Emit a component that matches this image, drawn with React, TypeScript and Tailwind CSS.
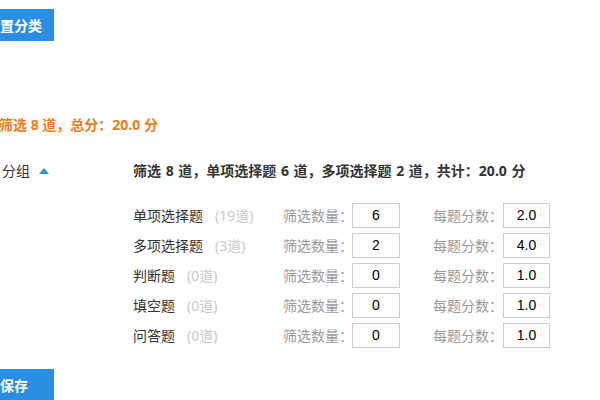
import React from "react";

const rows = [
  { name: "单项选择题", count: "(19道)", num: "6", score: "2.0" },
  { name: "多项选择题", count: "(3道)", num: "2", score: "4.0" },
  { name: "判断题", count: "(0道)", num: "0", score: "1.0" },
  { name: "填空题", count: "(0道)", num: "0", score: "1.0" },
  { name: "问答题", count: "(0道)", num: "0", score: "1.0" },
];

export default function App() {
  return (
    <div className="w-[600px] h-[400px] overflow-hidden bg-white text-[14px] text-[#333] font-['Noto_Sans','Noto_Sans_CJK_SC',sans-serif] whitespace-nowrap">
      <div className="ml-[-26px] pt-[9px] w-[640px]">
        <div className="w-[80px] h-[32px] bg-[#2b8de3] text-white font-bold flex items-center justify-center">
          设置分类
        </div>
        <div className="mt-[74px] h-[20px] leading-[20px] pl-[25px] font-bold text-[#f07a16]">
          筛选 8 道，总分：20.0 分
        </div>
        <div className="mt-[26px] h-[20px] leading-[20px] flex">
          <div className="w-[159px] shrink-0 pl-[28px] flex items-center">
            <span>分组</span>
            <span className="ml-[9px] w-0 h-0 border-l-[5px] border-r-[5px] border-b-[6px] border-l-transparent border-r-transparent border-b-[#2b8de3]" />
          </div>
          <div className="font-bold [word-spacing:1px]">筛选 8 道，单项选择题 6 道，多项选择题 2 道，共计：20.0 分</div>
        </div>
        <div className="mt-[19px] ml-[159px] flex flex-col">
          {rows.map((r) => (
            <div key={r.name} className="h-[30px] flex items-center">
              <div className="w-[150px] shrink-0 flex items-center">
                <span>{r.name}</span>
                <span className="ml-[12px] text-[#c8c8c8]">{r.count}</span>
              </div>
              <span className="w-[69px] shrink-0 text-[#999]">筛选数量：</span>
              <div className="w-[48px] shrink-0 h-[25px] border border-[#ccc] flex items-center justify-center text-black font-['Liberation_Sans',sans-serif]">
                {r.num}
              </div>
              <span className="ml-[33px] w-[70px] shrink-0 text-[#999]">每题分数：</span>
              <div className="w-[47px] shrink-0 h-[25px] border border-[#ccc] flex items-center justify-center text-black font-['Liberation_Sans',sans-serif]">
                {r.score}
              </div>
            </div>
          ))}
        </div>
        <div className="mt-[19px] w-[80px] h-[32px] bg-[#2b8de3] text-white font-bold flex items-center justify-center">
          保存
        </div>
      </div>
    </div>
  );
}
